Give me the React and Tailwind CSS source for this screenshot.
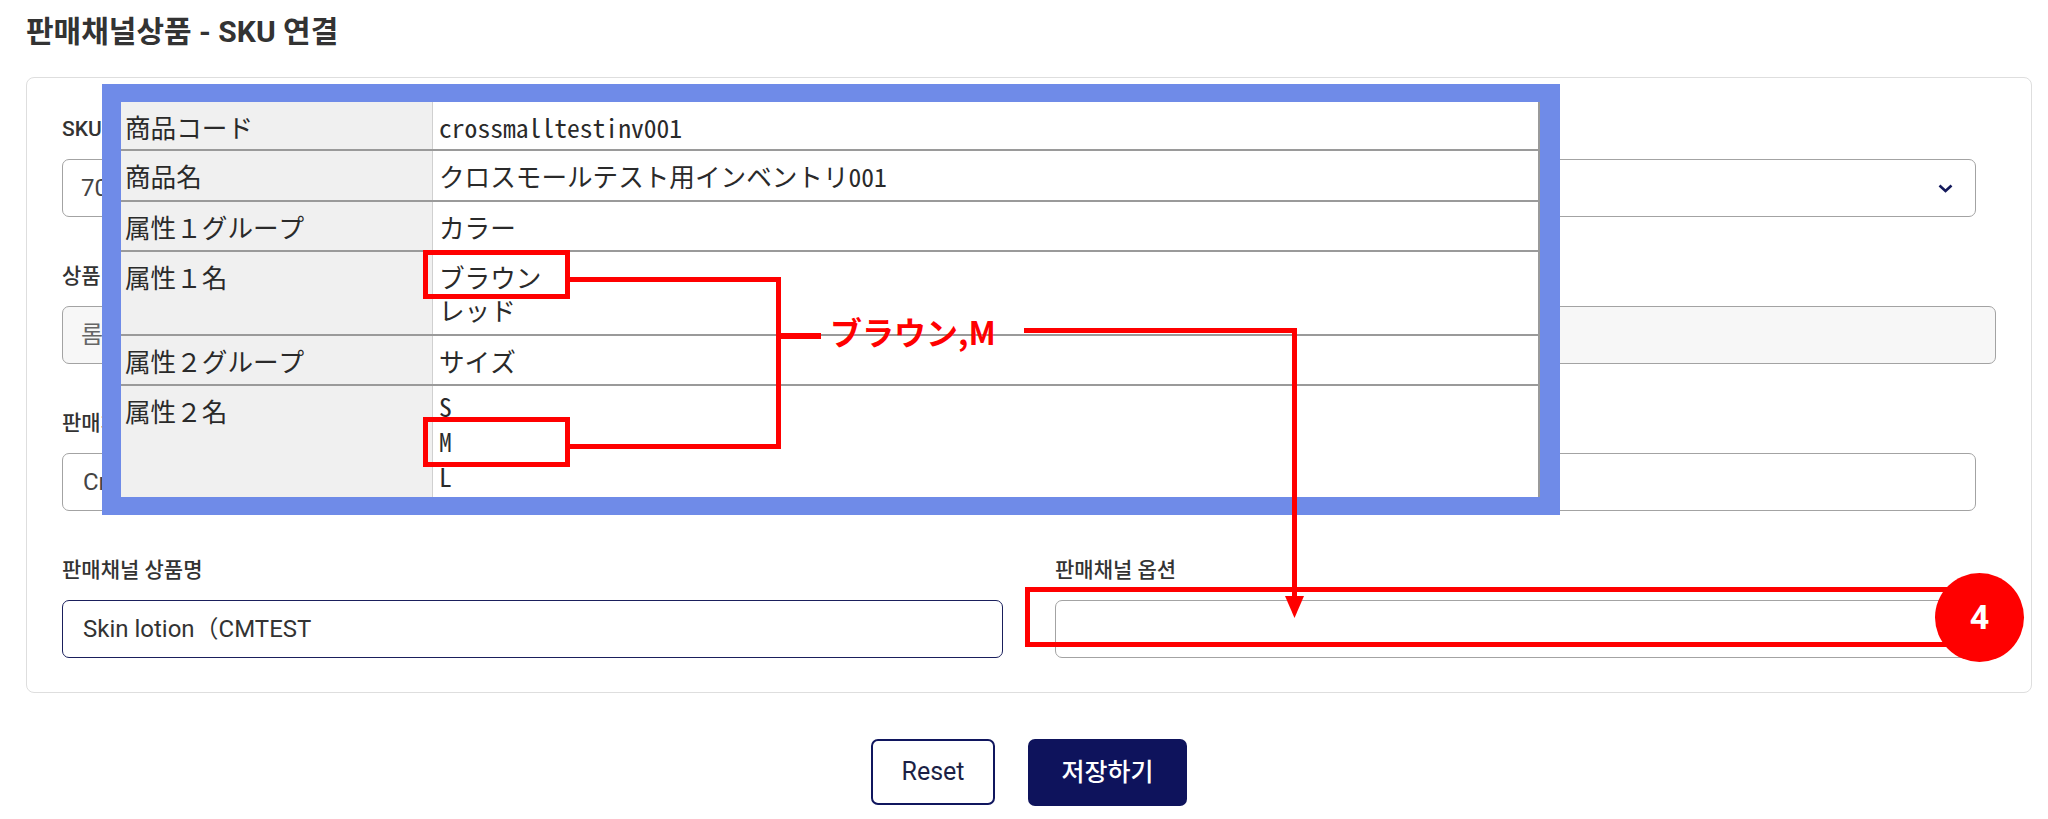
import React from "react"

const rows = [
  { label: "商品コード", values: ["crossmalltestinv001"], h: "h-[49px]" },
  { label: "商品名", values: ["クロスモールテスト用インベントリ001"], h: "h-[51px]" },
  { label: "属性１グループ", values: ["カラー"], h: "h-[50px]" },
  { label: "属性１名", values: ["ブラウン", "レッド"], h: "h-[84px]" },
  { label: "属性２グループ", values: ["サイズ"], h: "h-[50px]" },
  { label: "属性２名", values: ["S", "M", "L"], h: "h-[111px]", tight: true },
]

const Label = ({ children }) => (
  <div className="text-[21px] leading-[30px] font-medium text-[#333]">{children}</div>
)

const Field = ({ label, children, className = "" }) => (
  <div className={className}>
    <Label>{label}</Label>
    {children}
  </div>
)

const ItemTable = () => (
  <div className="absolute left-[102px] top-[84px] w-[1458px] h-[431px] bg-[#6f8be8] pt-[18px] pl-[19px] pr-[20px] pb-[18px]">
    <div className="h-full bg-white border-r-2 border-[#9a9a9a] font-['Noto_Sans_Mono_CJK_JP','Noto_Sans_CJK_JP',monospace] font-light text-[25.6px] text-[#2a2a2a]">
      {rows.map((row, i) => (
        <div
          key={i}
          className={`flex ${row.h} ${i < rows.length - 1 ? "border-b-2 border-[#9a9a9a]" : ""}`}
        >
          <div className="w-[312px] shrink-0 bg-[#f0f0f0] border-r border-[#d0d0d0] pl-[4px] pt-[8px] leading-[33px]">
            {row.label}
          </div>
          <div className={`pl-[6px] ${row.tight ? "pt-[2px] leading-[35px]" : "pt-[8px] leading-[33px]"}`}>
            {row.values.map((v) => (
              <div key={v}>{v}</div>
            ))}
          </div>
        </div>
      ))}
    </div>
  </div>
)

const Annotations = () => (
  <>
    <svg className="absolute left-0 top-0 pointer-events-none" width="2048" height="819">
      <g fill="none" stroke="#ff0000" strokeWidth="5">
        <rect x="425.5" y="252.5" width="142" height="44" />
        <rect x="425.5" y="419.5" width="142" height="45" />
        <rect x="1027.5" y="589.5" width="920" height="55" />
      </g>
      <g fill="#ff0000">
        <rect x="570" y="277" width="211" height="5" />
        <rect x="776" y="277" width="5" height="172" />
        <rect x="570" y="444" width="211" height="5" />
        <rect x="776" y="333" width="45" height="6" />
        <rect x="1024" y="328" width="273" height="5" />
        <rect x="1292" y="328" width="5" height="272" />
        <polygon points="1285,596 1304,596 1294.5,618" />
      </g>
    </svg>
    <div className="absolute left-[830px] top-[311px] leading-[40px] text-[32px] font-bold text-[#ff0000] font-['Noto_Sans_CJK_JP',sans-serif]">
      ブラウン,M
    </div>
    <div className="absolute left-[1935px] top-[573px] w-[89px] h-[89px] rounded-full bg-[#ff0000] flex items-center justify-center text-white text-[34px] font-bold font-['Roboto',sans-serif]">
      4
    </div>
  </>
)

export default function App() {
  return (
    <div className="relative w-[2048px] h-[819px] overflow-hidden bg-white font-['Roboto','Noto_Sans_CJK_KR',sans-serif]">
      <div className="pl-[26px] pr-[16px] pt-[14px]">
        <h1 className="text-[30px] leading-[36px] font-bold text-[#333]">판매채널상품 - SKU 연결</h1>

        <div className="mt-[27px] border border-[#dedede] rounded-[8px] pt-[36px] pb-[34px] px-[35px]">
          <Field label="SKU">
            <div className="mt-[15px] mr-[20px] h-[58px] border border-[#a3a3a3] rounded-[7px] flex items-center justify-between pl-[18px] pr-[22px] text-[24px] text-[#444]">
              <span>7000000001 - 크로스몰 테스트 SKU</span>
              <svg width="15" height="9" viewBox="0 0 15 9" fill="none">
                <path d="M1.5 1.5 L7.5 7 L13.5 1.5" stroke="#141a5c" strokeWidth="2.6" />
              </svg>
            </div>
          </Field>

          <Field label="상품명" className="mt-[44px]">
            <div className="mt-[15px] h-[58px] border border-[#a3a3a3] rounded-[7px] bg-[#f7f7f7] flex items-center pl-[18px] text-[24px] text-[#666]">
              롬앤 쥬시 래스팅 틴트
            </div>
          </Field>

          <Field label="판매채널 상품코드" className="mt-[44px]">
            <div className="mt-[15px] mr-[20px] h-[58px] border border-[#a3a3a3] rounded-[7px] flex items-center pl-[20px] text-[24px] text-[#444]">
              Crossmall-TEST-001
            </div>
          </Field>

          <div className="mt-[44px] grid grid-cols-2 gap-x-[52px]">
            <Field label="판매채널 상품명">
              <div className="mt-[15px] h-[58px] border-[1.5px] border-[#1a1f5c] rounded-[7px] flex items-center pl-[20px] text-[24px] text-[#333]">
                Skin lotion（CMTEST
              </div>
            </Field>
            <Field label="판매채널 옵션">
              <div className="mt-[15px] h-[58px] border border-[#a3a3a3] rounded-[7px]" />
            </Field>
          </div>
        </div>

        <div className="mt-[46px] flex justify-center gap-[33px]">
          <button className="w-[124px] h-[66px] border-2 border-[#10165e] rounded-[7px] bg-white text-[25px] text-[#1b1f45]">
            Reset
          </button>
          <button className="w-[159px] h-[67px] rounded-[7px] bg-[#0e135c] text-[25px] text-white font-medium">
            저장하기
          </button>
        </div>
      </div>

      <ItemTable />
      <Annotations />
    </div>
  )
}
